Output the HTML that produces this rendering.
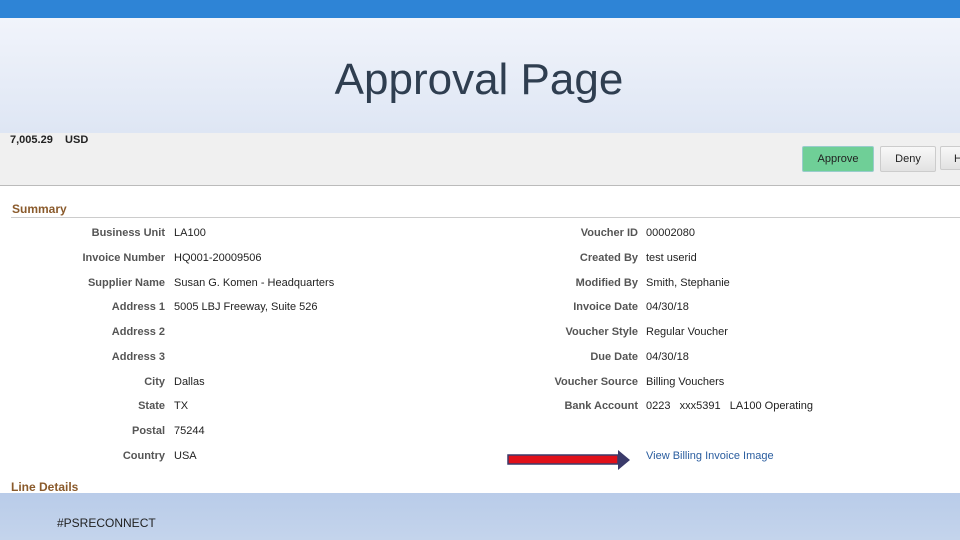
<!DOCTYPE html>
<html><head><style>
body{margin:0;width:960px;height:540px;position:relative;overflow:hidden;background:#fff;font-family:"Liberation Sans",sans-serif}
.a{position:absolute}
.l{position:absolute;font-size:11px;color:#555;font-weight:bold;text-align:right;width:160px}
.v{position:absolute;font-size:11px;color:#222}
</style></head><body>
<div class="a" style="left:0;top:0;width:960px;height:18px;background:#2e84d6"></div>
<div class="a" style="left:0;top:18px;width:960px;height:115px;background:linear-gradient(#f1f4fb,#dee6f4)"></div>
<div class="a" style="left:0;top:55px;width:958px;text-align:center;font-size:44px;color:#2f3e50">Approval Page</div>
<div class="a" style="left:0;top:133px;width:960px;height:52px;background:#f0f0f0;border-bottom:1px solid #bbb"></div>
<div class="a" style="left:10px;top:134px;font-size:11px;font-weight:bold;color:#222">7,005.29 &nbsp;&nbsp; USD</div>
<div class="a" style="left:802px;top:146px;width:70px;height:24px;background:#6fcf97;border:1px solid #9cc;border-radius:2px;font-size:11px;line-height:24px;text-align:center;color:#222">Approve</div>
<div class="a" style="left:880px;top:146px;width:54px;height:24px;background:linear-gradient(#f8f8f8,#e2e2e2);border:1px solid #ccc;border-radius:2px;font-size:11px;line-height:24px;text-align:center;color:#222">Deny</div>
<div class="a" style="left:940px;top:146px;width:30px;height:24px;background:linear-gradient(#f8f8f8,#e2e2e2);border:1px solid #ccc;border-radius:2px;font-size:11px;line-height:24px;color:#222;padding-left:13px;box-sizing:border-box">H</div>
<div class="a" style="left:12px;top:202px;font-size:12px;font-weight:bold;color:#8a5a2b">Summary</div>
<div class="a" style="left:11px;top:217px;width:949px;height:1px;background:#ccc"></div>

<div class="l" style="left:5px;top:227px">Business Unit</div><div class="v" style="left:174px;top:227px">LA100</div>
<div class="l" style="left:5px;top:252px">Invoice Number</div><div class="v" style="left:174px;top:252px">HQ001-20009506</div>
<div class="l" style="left:5px;top:277px">Supplier Name</div><div class="v" style="left:174px;top:277px">Susan G. Komen - Headquarters</div>
<div class="l" style="left:5px;top:301px">Address 1</div><div class="v" style="left:174px;top:301px">5005 LBJ Freeway, Suite 526</div>
<div class="l" style="left:5px;top:326px">Address 2</div>
<div class="l" style="left:5px;top:351px">Address 3</div>
<div class="l" style="left:5px;top:376px">City</div><div class="v" style="left:174px;top:376px">Dallas</div>
<div class="l" style="left:5px;top:400px">State</div><div class="v" style="left:174px;top:400px">TX</div>
<div class="l" style="left:5px;top:425px">Postal</div><div class="v" style="left:174px;top:425px">75244</div>
<div class="l" style="left:5px;top:450px">Country</div><div class="v" style="left:174px;top:450px">USA</div>

<div class="l" style="left:478px;top:227px">Voucher ID</div><div class="v" style="left:646px;top:227px">00002080</div>
<div class="l" style="left:478px;top:252px">Created By</div><div class="v" style="left:646px;top:252px">test userid</div>
<div class="l" style="left:478px;top:277px">Modified By</div><div class="v" style="left:646px;top:277px">Smith, Stephanie</div>
<div class="l" style="left:478px;top:301px">Invoice Date</div><div class="v" style="left:646px;top:301px">04/30/18</div>
<div class="l" style="left:478px;top:326px">Voucher Style</div><div class="v" style="left:646px;top:326px">Regular Voucher</div>
<div class="l" style="left:478px;top:351px">Due Date</div><div class="v" style="left:646px;top:351px">04/30/18</div>
<div class="l" style="left:478px;top:376px">Voucher Source</div><div class="v" style="left:646px;top:376px">Billing Vouchers</div>
<div class="l" style="left:478px;top:400px">Bank Account</div><div class="v" style="left:646px;top:400px">0223 &nbsp;&nbsp;xxx5391 &nbsp;&nbsp;LA100 Operating</div>
<div class="v" style="left:646px;top:450px;color:#2a5d9f">View Billing Invoice Image</div>
<svg class="a" style="left:507px;top:449px" width="125" height="22"><rect x="1" y="6" width="110" height="9" fill="#e0101a" stroke="#3a3a6a" stroke-width="1.5"/><polygon points="111,1 123,11 111,21" fill="#3a3a6a"/></svg>
<div class="a" style="left:11px;top:480px;font-size:12px;font-weight:bold;color:#8a5a2b">Line Details</div>
<div class="a" style="left:0;top:493px;width:960px;height:47px;background:linear-gradient(#b9cce9,#c4d4ec)"></div>
<div class="a" style="left:57px;top:516px;font-size:12px;color:#222">#PSRECONNECT</div>
</body></html>
